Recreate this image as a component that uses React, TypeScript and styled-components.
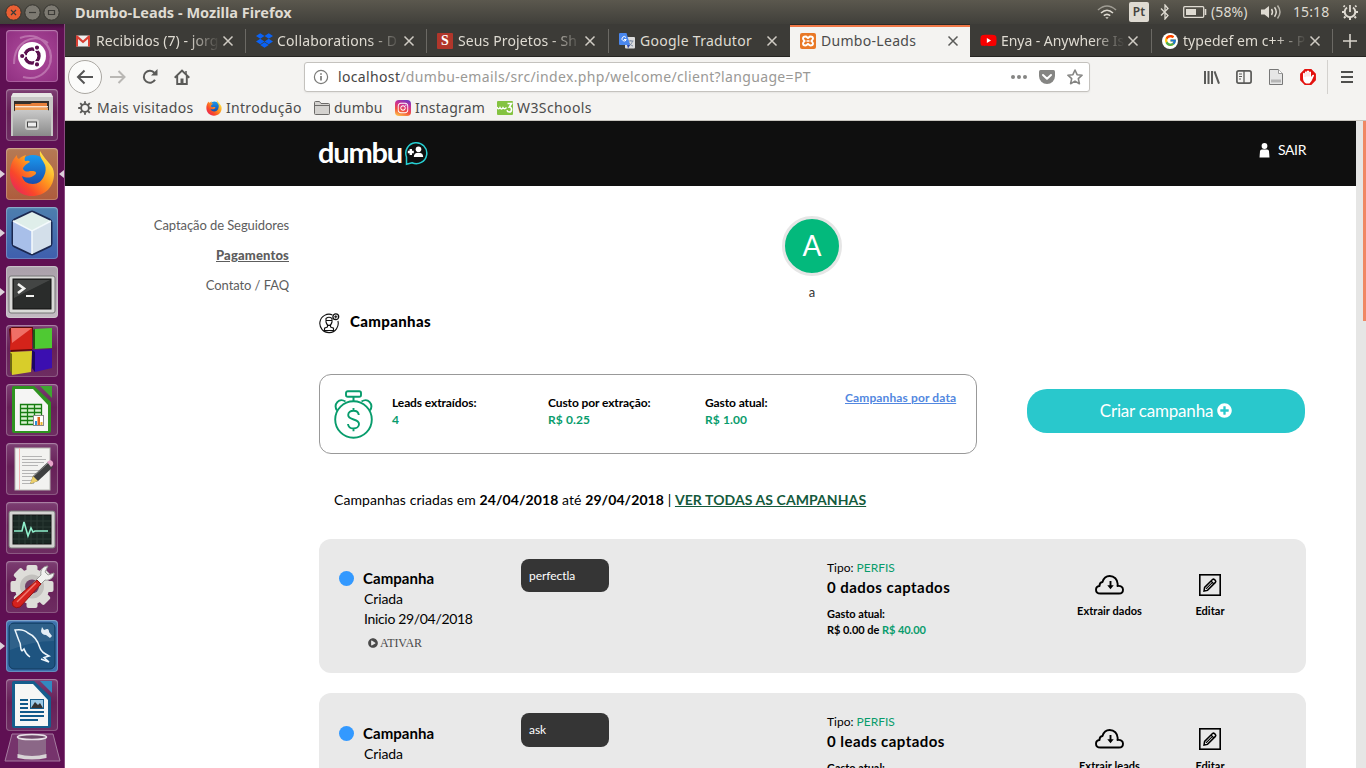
import React from "react";
import styled, { createGlobalStyle, css } from "styled-components";
import { FaPlusCircle, FaPlayCircle, FaDropbox, FaYoutube, FaInstagram } from "react-icons/fa";
import { FcGoogle } from "react-icons/fc";

const uiFont = `"Noto Sans", "Open Sans", sans-serif`;
const webFont = `Lato, "Open Sans", sans-serif`;

const GlobalStyle = createGlobalStyle`
  * { box-sizing: border-box; }
  html, body { margin: 0; padding: 0; background: #fff; overflow: hidden; }
  svg { display: block; flex: none; }
`;

/* ---------- desktop frame ---------- */

const Desktop = styled.div`
  width: 1366px;
  height: 768px;
  display: flex;
  flex-direction: column;
  overflow: hidden;
  font-family: ${uiFont};
`;

const Workspace = styled.div`
  flex: 1;
  min-height: 0;
  display: flex;
`;

const TitleBar = styled.header`
  height: 24px;
  flex: none;
  display: flex;
  align-items: center;
  padding-left: 5px;
  background: linear-gradient(#5b584e, #403f3a);
  color: #dfdbd2;
`;

const WindowButtons = styled.div`
  display: flex;
  gap: 2px;
  width: 70px;
`;

const WindowTitle = styled.div`
  flex: 1;
  font-size: 14.5px;
  font-weight: 700;
  letter-spacing: 0.02px;
  line-height: 22px;
  padding-bottom: 1px;
  white-space: nowrap;
`;

const Indicators = styled.div`
  display: flex;
  align-items: center;
  height: 24px;
`;

const IndicatorCell = styled.div<{ $w: number }>`
  width: ${(p) => p.$w}px;
  display: flex;
  align-items: center;
  font-size: 14px;
  letter-spacing: 0.1px;
  line-height: 24px;
  white-space: nowrap;
`;

const KeyboardBadge = styled.span`
  width: 20px;
  height: 20px;
  border-radius: 2px;
  background: #dfdbd2;
  color: #45433e;
  font-size: 12px;
  font-weight: 600;
  line-height: 20px;
  text-align: center;
`;

/* ---------- launcher ---------- */

const LauncherBar = styled.nav`
  width: 65px;
  flex: none;
  padding-top: 6px;
  display: flex;
  flex-direction: column;
  gap: 7px;
  overflow: hidden;
  background: linear-gradient(#3f0b38 0, #5f1053 5px, #5f1053 100%);
  border-right: 1px solid #8a4a80;
`;

const LauncherRow = styled.div`
  display: flex;
  align-items: center;
  height: 52px;
  flex: none;
`;

const Pip = styled.span<{ $on?: boolean; $right?: boolean }>`
  width: 0;
  height: 0;
  border-top: 4px solid transparent;
  border-bottom: 4px solid transparent;
  ${(p) =>
    p.$right
      ? css`border-right: 5px solid ${p.$on ? "#dcd0da" : "transparent"};`
      : css`
          border-left: 5px solid ${p.$on ? "#dcd0da" : "transparent"};
          margin-right: 1px;
        `}
`;

const Tile = styled.div<{ $bg: string }>`
  width: 52px;
  height: 52px;
  border-radius: 4px;
  background: ${(p) => p.$bg};
  box-shadow: inset 0 0 0 1px rgba(255, 255, 255, 0.2), inset 0 1px 2px rgba(255, 255, 255, 0.25);
  margin-right: 1px;
  overflow: hidden;
`;

const TrashSlot = styled.div`
  padding-left: 4px;
  margin-top: -5px;
`;

/* ---------- browser chrome ---------- */

const Browser = styled.section`
  flex: 1;
  min-width: 0;
  display: flex;
  flex-direction: column;
  background: #f4f3f1;
`;

const TabStrip = styled.div`
  height: 33px;
  flex: none;
  display: flex;
  background: #3c3b37;
`;

const Tab = styled.div<{ $active?: boolean; $line?: boolean; $w: number }>`
  width: ${(p) => p.$w}px;
  flex: none;
  display: flex;
  align-items: center;
  padding: 0 9px 0 10px;
  color: ${(p) => (p.$active ? "#4c4c4c" : "#dfdbd2")};
  font-size: 14px;
  ${(p) =>
    p.$active
      ? css`
          background: linear-gradient(#2a2926 0 1px, #f07746 1px 3px, #f4f3f1 3px);
        `
      : css`
          background: ${p.$line
            ? "linear-gradient(#6b6964, #6b6964) right 5px / 1px 24px no-repeat,"
            : ""} linear-gradient(#3c3b37 0 32px, #262522 32px);
        `}
`;

const TabIcon = styled.span`
  width: 16px;
  height: 16px;
  flex: none;
  display: flex;
  align-items: center;
  justify-content: center;
`;

const TabLabel = styled.span<{ $ls: number; $fade?: boolean }>`
  width: 124px;
  margin-left: 5px;
  overflow: hidden;
  white-space: nowrap;
  line-height: 22px;
  letter-spacing: ${(p) => p.$ls}px;
  ${(p) => p.$fade && css`mask-image: linear-gradient(90deg, #000 92px, transparent 124px);`}
`;

const CloseIcon = styled.svg`
  margin-left: 2px;
`;

const NewTab = styled.div`
  flex: 1;
  display: flex;
  align-items: center;
  justify-content: center;
  background: linear-gradient(#3c3b37 0 32px, #262522 32px);
`;

const Toolbar = styled.div`
  height: 40px;
  flex: none;
  display: flex;
  align-items: center;
  padding-left: 3px;
`;

const BackButton = styled.div`
  width: 34px;
  height: 34px;
  flex: none;
  border-radius: 50%;
  border: 1px solid #aaa7a2;
  background: #fbfbfa;
  display: flex;
  align-items: center;
  justify-content: center;
`;

const ToolButton = styled.div<{ $w?: number }>`
  width: ${(p) => p.$w ?? 32}px;
  flex: none;
  display: flex;
  justify-content: center;
`;

const AddressBar = styled.div`
  width: 786px;
  height: 30px;
  flex: none;
  margin: 0 106px;
  border: 1px solid #c4c2be;
  border-radius: 3px;
  background: #fff;
  display: flex;
  align-items: center;
  padding-left: 8px;
  box-shadow: 0 1px 2px rgba(0, 0, 0, 0.06);
`;

const Address = styled.div`
  flex: 1;
  margin-left: 9px;
  color: #9a9996;
  font-size: 14px;
  letter-spacing: 0.35px;
  line-height: 28px;
  white-space: nowrap;
  b { font-weight: 400; color: #454545; }
`;

const ToolDivider = styled.div`
  width: 1px;
  height: 34px;
  margin-left: 3px;
  background: #d3d1ce;
`;

const BookmarkBar = styled.div`
  height: 24px;
  flex: none;
  display: flex;
  padding: 0 0 2px 12px;
  border-bottom: 1px solid #c8c5bf;
`;

const Bookmark = styled.div<{ $w: number; $ls: number }>`
  width: ${(p) => p.$w}px;
  display: flex;
  align-items: center;
  gap: 4px;
  font-size: 14px;
  letter-spacing: ${(p) => p.$ls}px;
  line-height: 21px;
  color: #4c4c4c;
  white-space: nowrap;
`;

/* ---------- page ---------- */

const Viewport = styled.div`
  flex: 1;
  min-height: 0;
  display: flex;
`;

const Page = styled.div`
  width: 1291px;
  background: #fff;
  font-family: ${webFont};
  color: #000;
  overflow: hidden;
`;

const Scrollbar = styled.div`
  width: 10px;
  background: #e6e6e5;
  display: flex;
  justify-content: flex-end;
`;

const ScrollThumb = styled.div`
  width: 3px;
  height: 200px;
  background: #f08763;
`;

const SiteHeader = styled.div`
  height: 65px;
  background: #0f0f0f;
  display: flex;
  justify-content: space-between;
  padding: 0 50px 0 253px;
`;

const Logo = styled.div`
  display: flex;
  color: #fff;
  font-size: 29px;
  font-weight: 700;
  letter-spacing: -1.2px;
  line-height: 62px;
  svg { margin: 19px 0 0 2px; }
`;

const LogoText = styled.span`
  width: 84px;
`;

const Logout = styled.div`
  display: flex;
  gap: 8px;
  color: #fff;
  font-size: 14px;
  letter-spacing: -0.4px;
  line-height: 58px;
  svg { margin-top: 22px; }
`;

const PageBody = styled.div`
  display: flex;
`;

const SideMenu = styled.nav`
  width: 224px;
  padding-top: 24px;
  text-align: right;
`;

const SideLink = styled.a<{ $current?: boolean }>`
  display: block;
  font-size: 13px;
  line-height: 30px;
  letter-spacing: -0.08px;
  color: #5d5d5d;
  ${(p) => p.$current && css`font-weight: 900; letter-spacing: 0.15px; text-decoration: underline;`}
`;

const Main = styled.main`
  width: 987px;
  margin-left: 30px;
  padding-top: 30px;
`;

const Profile = styled.div`
  display: flex;
  flex-direction: column;
  align-items: center;
  width: 986px;
  font-size: 13px;
  line-height: 19px;
  color: #333;
`;

const Avatar = styled.div`
  width: 60px;
  height: 60px;
  margin-bottom: 7px;
  border: 3px solid #e6e6e6;
  border-radius: 50%;
  background: #03b97c;
  color: #fff;
  font-size: 28px;
  line-height: 53px;
  text-align: center;
`;

const SectionTitle = styled.h2`
  display: flex;
  align-items: flex-start;
  gap: 10px;
  height: 20px;
  margin: 10px 0 0;
  font-size: 15px;
  font-weight: 900;
  line-height: 18px;
  letter-spacing: 0.35px;
  svg { margin-top: 1px; }
`;

const SummaryRow = styled.div`
  display: flex;
  margin-top: 42px;
`;

const SummaryBox = styled.div`
  width: 658px;
  height: 80px;
  border: 1px solid #999;
  border-radius: 12px;
  display: flex;
  padding: 14px 0 0 14px;
  > svg { margin: 1px 19px 0 0; }
`;

const Stat = styled.div<{ $w: number }>`
  width: ${(p) => p.$w}px;
  padding-top: 5px;
  font-size: 12px;
  font-weight: 700;
  line-height: 17px;
  letter-spacing: -0.1px;
  white-space: nowrap;
`;

const Green = styled.span`
  color: #089c6c;
`;

const StatValue = styled(Green)`
  display: block;
  letter-spacing: 0.1px;
`;

const DateLink = styled.a`
  font-size: 12px;
  font-weight: 700;
  line-height: 17px;
  letter-spacing: 0.12px;
  color: #5287e0;
  text-decoration: underline;
  white-space: nowrap;
`;

const CreateButton = styled.button`
  width: 278px;
  height: 44px;
  margin: 15px 0 0 50px;
  padding: 0 0 2px;
  border: 0;
  border-radius: 20px;
  background: #29c8cc;
  color: #fff;
  font: 17px ${webFont};
  letter-spacing: -0.2px;
  display: flex;
  align-items: center;
  justify-content: center;
  gap: 4px;
`;

const FilterLine = styled.p`
  margin: 36px 0 29px 15px;
  font-size: 14px;
  line-height: 20px;
  letter-spacing: 0.08px;
  white-space: nowrap;
`;

const AllLink = styled.a`
  color: #145a3c;
  font-weight: 700;
  text-decoration: underline;
`;

const Card = styled.article`
  height: 134px;
  margin-bottom: 20px;
  border-radius: 12px;
  background: #e9e9e9;
  display: flex;
  padding: 20px 0 0 20px;
`;

const CardInfo = styled.div<{ $drop: number }>`
  width: 182px;
  display: grid;
  grid-template-columns: 15px 1fr;
  column-gap: 9px;
  align-content: start;
  padding-top: ${(p) => 10 + p.$drop}px;
`;

const StatusDot = styled.span`
  width: 15px;
  height: 15px;
  margin-top: 2px;
  border-radius: 50%;
  background: #3399ff;
`;

const CardTitle = styled.div`
  height: 20px;
  font-size: 15px;
  font-weight: 700;
  line-height: 18px;
  letter-spacing: 0.05px;
`;

const CardLine = styled.div<{ $ls: number }>`
  grid-column: 2;
  padding-left: 1px;
  font-size: 14px;
  line-height: 20px;
  letter-spacing: ${(p) => p.$ls}px;
`;

const Activate = styled.div`
  grid-column: 2;
  display: flex;
  align-items: center;
  gap: 2px;
  margin-top: 4px;
  padding-left: 5px;
  font: 12px "Liberation Serif", serif;
  line-height: 20px;
  letter-spacing: -0.1px;
  color: #4a4a4a;
`;

const TagColumn = styled.div`
  width: 306px;
`;

const Tag = styled.div<{ $h: number }>`
  width: 88px;
  height: ${(p) => p.$h}px;
  border-radius: 8px;
  background: #353535;
  color: #fff;
  padding-left: 8px;
  font-size: 12px;
  letter-spacing: -0.05px;
  line-height: 33px;
`;

const Metrics = styled.div`
  width: 240px;
  font-size: 12px;
  line-height: 18px;
`;

const MetricTotal = styled.div`
  font-size: 15px;
  font-weight: 700;
  letter-spacing: 0.45px;
  line-height: 20px;
  margin-bottom: 9px;
`;

const MetricSmall = styled.div`
  font-size: 11px;
  font-weight: 700;
  line-height: 16px;
  letter-spacing: -0.04px;
`;

const Action = styled.div<{ $w: number; $top: number; $gap: number }>`
  width: ${(p) => p.$w}px;
  display: flex;
  flex-direction: column;
  align-items: center;
  padding-top: ${(p) => p.$top}px;
  gap: ${(p) => p.$gap}px;
  font-size: 11px;
  font-weight: 700;
  line-height: 16px;
  letter-spacing: 0.05px;
  white-space: nowrap;
`;

/* ---------- icons ---------- */

const WinBtn = ({ kind }: { kind: "close" | "min" | "max" }) => (
  <svg width="17" height="17" viewBox="0 0 17 17">
    <circle cx="8.5" cy="8.5" r="7.7" fill={kind === "close" ? "#ea5f33" : "#7d7a72"} stroke="#35342f" />
    <g stroke="#3c3b37" strokeWidth="1.2" fill="none">
      {kind === "close" && <path d="M6 6l5 5M11 6l-5 5" />}
      {kind === "min" && <path d="M5 8.5h7" />}
      {kind === "max" && <path d="M5.5 6.5h6v4h-6z" />}
    </g>
  </svg>
);

const Cross = ({ dark }: { dark?: boolean }) => (
  <CloseIcon width="12" height="12" viewBox="0 0 12 12">
    <path d="M1.5 1.5l9 9M10.5 1.5l-9 9" stroke={dark ? "#5a5a58" : "#d0ccc4"} strokeWidth="1.5" />
  </CloseIcon>
);

const FirefoxIcon = ({ size }: { size: number }) => (
  <svg width={size} height={size} viewBox="0 0 46 46">
    <defs>
      <linearGradient id="fxo" x1="0.9" y1="0.1" x2="0.1" y2="0.9">
        <stop offset="0" stopColor="#fff14d" />
        <stop offset="0.4" stopColor="#ff9a1f" />
        <stop offset="0.75" stopColor="#f9472a" />
        <stop offset="1" stopColor="#e8285a" />
      </linearGradient>
      <linearGradient id="fxb" x1="0" y1="0" x2="0" y2="1">
        <stop offset="0" stopColor="#1a9af0" />
        <stop offset="1" stopColor="#1846a5" />
      </linearGradient>
    </defs>
    <circle cx="24" cy="20" r="16" fill="url(#fxb)" />
    <path
      d="M31 0c-1 6 3 9 5 14 1 3 1 7-1 11-2 5-6 8-11 8-6 0-10-3-11-8 4 2 8 2 11 0 2-1 3-2 3-3 0-2-3-2-6-2-3 1-5 1-7-2 0-2 3-5 7-7-1-2-4-1-5-1-1-2 0-4 1-6-4 1-6 3-7 4-2-1-2-2-2-4C3 9 1 15 1 23c0 12 9 22 22 22s22-9 22-22c0-9-7-11-14-23z"
      fill="url(#fxo)"
    />
  </svg>
);

const UbuntuIcon = () => (
  <svg width="52" height="52" viewBox="0 0 52 52">
    <path d="M8 34C8 12 27 2 42 13M44 20c5 17-9 32-27 27M14 8c18-7 34 7 30 25" fill="none" stroke="#d7a3cb" strokeOpacity=".5" strokeWidth="2" />
    <circle cx="26" cy="26" r="14" fill="#fff" />
    <circle cx="26" cy="26" r="7" fill="none" stroke="#5b114f" strokeWidth="3.4" />
    <path d="M26 26L14 26M26 26l6-10.4M26 26l6 10.4" stroke="#fff" strokeWidth="1.4" />
    <circle cx="26" cy="26" r="5.2" fill="#fff" />
    <g fill="#5b114f" stroke="#fff" strokeWidth="1.2">
      <circle cx="16.2" cy="26" r="2.7" />
      <circle cx="31" cy="17.6" r="2.7" />
      <circle cx="31" cy="34.4" r="2.7" />
    </g>
  </svg>
);

const FilesIcon = () => (
  <svg width="52" height="52" viewBox="0 0 52 52">
    <defs>
      <linearGradient id="cab" x1="0" y1="0" x2="0" y2="1">
        <stop offset="0" stopColor="#c9c9c9" />
        <stop offset="1" stopColor="#8a8a8a" />
      </linearGradient>
    </defs>
    <path d="M5 8l2-4h38l2 4v39H5z" fill="#c8c8c6" />
    <path d="M5 8l2-4h38l2 4z" fill="#e6e6e4" />
    <rect x="8" y="12" width="35" height="11" fill="#35302c" />
    <path d="M9 15h15l2-1h15v9H9z" fill="#e8803a" />
    <path d="M9 17h33v1.500H9z" fill="#fbe6d0" />
    <path d="M9 19h33v3H9z" fill="#f0a25a" />
    <path d="M7 23l3-2h32l3 2v24H7z" fill="url(#cab)" />
    <rect x="19" y="30" width="14" height="11" rx="3" fill="#d2d2d0" />
    <rect x="21.500" y="33" width="9" height="5" fill="#eee" stroke="#444" />
  </svg>
);

const CubeIcon = () => (
  <svg width="52" height="52" viewBox="0 0 52 52">
    <path d="M26 8l16 7.500v21L26 44l-16-7.500v-21z" fill="#1d2b52" stroke="#1b2850" strokeWidth="9" strokeLinejoin="round" />
    <path d="M26 5l19 9-19 10L7 14z" fill="#dfeeea" />
    <path d="M7 14l19 10v23L7 38z" fill="#a8bfe9" />
    <path d="M45 14L26 24v23l19-9z" fill="#d3dfea" />
    <path d="M7 14l19 10 19-10M26 24v23" fill="none" stroke="#f4fafc" strokeWidth="1.5" />
  </svg>
);

const TerminalIcon = () => (
  <svg width="52" height="52" viewBox="0 0 52 52">
    <rect x="3" y="10" width="46" height="37" rx="2" fill="#d9d9d7" stroke="#777" />
    <rect x="7" y="13" width="38" height="30" fill="#2a2c2b" stroke="#111" />
    <path d="M8 14h36L8 32z" fill="#fff" fillOpacity=".12" />
    <path d="M12 18l6 4.500-6 4.500" stroke="#f2f2f0" strokeWidth="2.600" fill="none" />
    <path d="M20 30h8" stroke="#f2f2f0" strokeWidth="2" />
  </svg>
);

const BlocksIcon = () => (
  <svg width="52" height="52" viewBox="0 0 52 52">
    <path d="M3 4l3-2h21l-1 23-21 2z" fill="#5c0b08" />
    <path d="M5 3h21v21L4 25z" fill="#d4231a" />
    <path d="M5 3h21L6 18z" fill="#ef6f66" />
    <path d="M28 4l18-1v20l-18 1z" fill="#4fc933" />
    <path d="M27 5l2-1v20l-2-1z" fill="#1c5b10" />
    <path d="M4 27l22-1-1 21-19 3z" fill="#d8cd2a" />
    <path d="M4 27l2 2v20l-2-3z" fill="#6d6714" />
    <path d="M26 25l20-1v19l-17 4-3-4z" fill="#3b0fb0" />
    <path d="M26 25l3 2v20l-3-4z" fill="#1d0663" />
  </svg>
);

const CalcIcon = () => (
  <svg width="52" height="52" viewBox="0 0 52 52">
    <path d="M6 4q0-2 2-2h20l17 16v29q0 2-2 2H8q-2 0-2-2z" fill="#2f9320" />
    <path d="M9 5h18l15 16v26H9z" fill="#f5f5f4" />
    <path d="M34 2h12v12z" fill="#3fa531" />
    <g stroke="#157c10" strokeWidth="1.300" fill="#d8f2cf">
      <path d="M14.500 20.500h21v20h-21z" />
      <path d="M14.500 24.500h21M14.500 28.500h21M14.500 32.500h21M14.500 36.500h21M21.500 20.500v20M28.500 20.500v20" />
    </g>
    <rect x="27.500" y="31.500" width="10" height="10" fill="#fff" stroke="#888" />
    <path d="M29 37h2v4h-2z" fill="#2a90d8" />
    <path d="M31.500 33h2.500v8h-2.500z" fill="#e0661d" />
    <path d="M34.500 38h2v3h-2z" fill="#e8b32a" />
  </svg>
);

const EditorIcon = () => (
  <svg width="52" height="52" viewBox="0 0 52 52">
    <rect x="9" y="5" width="35" height="42" fill="#f2f2f0" stroke="#b5b5b0" />
    <path d="M13.500 5v42" stroke="#f3b6b6" />
    <g stroke="#b4b4b4">
      <path d="M16 13.500h20M16 16.500h24M16 19.500h22M16 22.500h16M16 27.500h24M16 30.500h18M16 33.500h14M16 37.500h10M16 40.500h12" />
    </g>
    <path d="M24 41l3-8 15-14 5 5-15 14z" fill="#3e4040" />
    <path d="M24 41l3-8 5 5z" fill="#ecd06c" />
    <path d="M41 19l3-2q4 1 3 5l-2 2z" fill="#e6a5ca" />
    <path d="M28 33l14-13" stroke="#888" />
  </svg>
);

const MonitorIcon = () => (
  <svg width="52" height="52" viewBox="0 0 52 52">
    <rect x="3" y="9" width="46" height="37" rx="2" fill="#d3d3d1" stroke="#777" />
    <rect x="7" y="13" width="38" height="29" fill="#1a2824" stroke="#111" />
    <path d="M7 19h38M7 25h38M7 31h38M7 37h38M13 13v29M19 13v29M25 13v29M31 13v29M37 13v29" stroke="#2b3a35" />
    <path d="M8 29h8l2-9 4 14 3-8 2 4 2-1h13" fill="none" stroke="#8ff0cb" strokeWidth="1.600" />
  </svg>
);

const ToolsIcon = () => (
  <svg width="52" height="52" viewBox="0 0 52 52">
    <g fill="#deddd9">
      {[0, 45, 90, 135].map((a) => (
        <rect key={a} x="20.500" y="4" width="11" height="43" rx="2" transform={`rotate(${a} 26 25.500)`} />
      ))}
      <circle cx="26" cy="25.500" r="17.500" />
    </g>
    <circle cx="26" cy="25.500" r="12" fill="#c2c0bd" />
    <circle cx="26" cy="25.500" r="7" fill="#6f3d66" />
    <path d="M24 25l11-11c-1-5 2-9 7-9l-3 6 3 3 6-2c0 5-5 8-9 7L29 29z" fill="#f1f1ef" stroke="#9a9a98" />
    <path d="M31 19l4 4-21 23q-4 2-7-1-2-4 1-6z" fill="#d5221f" stroke="#98100f" />
    <path d="M30 22L11 41" stroke="#f27a72" strokeWidth="1.500" />
  </svg>
);

const DolphinIcon = () => (
  <svg width="52" height="52" viewBox="0 0 52 52">
    <rect x="3" y="3" width="46" height="46" rx="5" fill="#1e5480" stroke="#123b5e" />
    <path d="M4 4h44v17Q26 21 4 30z" fill="#fff" fillOpacity=".08" />
    <path
      d="M16 31c-2-2-1-5-2-8-2-4-3-8-5-13 6-1 10 0 13 3 7 3 10 8 12 15 1 4 5 6 9 8l-5 1.500 5 4.500-8-3M16 31l2-2c1 3 3 6 6 8"
      fill="none"
      stroke="#edf6fb"
      strokeWidth="1.500"
    />
    <path d="M36 7l2 3 3-1c2 0 2 2 2 3l3 4-2 2-4-3c-3 0-5-2-5-4z" fill="#e4edf5" />
  </svg>
);

const WriterIcon = () => (
  <svg width="52" height="52" viewBox="0 0 52 52">
    <path d="M6 4q0-2 2-2h20l17 16v29q0 2-2 2H8q-2 0-2-2z" fill="#155d8d" />
    <path d="M9 5h18l15 16v26H9z" fill="#f6f6f5" />
    <path d="M34 2h12v12z" fill="#3289c0" />
    <path d="M14 21h8M14 25h8M14 29h8M14 33h24M14 37h24M14 41h18" stroke="#115a8a" strokeWidth="2" />
    <rect x="24.500" y="20.500" width="13" height="9" fill="#9bc9e6" stroke="#155d8d" />
    <path d="M25 29l4-6 3 3 2-2 3 5z" fill="#333" />
  </svg>
);

const TrashIcon = () => (
  <svg width="57" height="32" viewBox="0 0 57 32">
    <path d="M8 1h41l7 27H1z" fill="#fff" fillOpacity=".15" stroke="#a57b9f" />
    <path d="M14 4v20q14 4 28 0V4z" fill="#9a8b99" fillOpacity=".6" />
    <ellipse cx="28" cy="4" rx="14.500" ry="2.600" fill="#6f4a6a" stroke="#e8e2e7" strokeWidth="1.500" />
    <path d="M13.500 21q14.500 4 29 0v4q-14.500 3-29 0z" fill="#d8d4d6" />
  </svg>
);

const GearSmall = () => (
  <svg width="16" height="16" viewBox="0 0 16 16" fill="none" stroke="#5a5a58">
    <circle cx="8" cy="8" r="3.900" strokeWidth="1.900" />
    <path
      d="M8 1.200v2.600M8 12.200v2.600M1.200 8h2.600M12.200 8h2.600M3.200 3.200l1.900 1.900M10.900 10.900l1.900 1.900M12.800 3.200l-1.900 1.900M5.100 10.900l-1.900 1.900"
      strokeWidth="1.900"
    />
  </svg>
);

const GmailIcon = () => (
  <svg width="16" height="16" viewBox="0 0 16 16">
    <rect x="1" y="2.500" width="14" height="11" rx="1" fill="#eee" />
    <path d="M1 13.500v-11h1.500L8 7.500l5.500-5H15v11h-2V6L8 10.300 3 6v7.500z" fill="#d93f33" />
  </svg>
);

const BadgeS = styled.span`
  width: 16px;
  height: 16px;
  border-radius: 1px;
  background: #b1362b;
  color: #fff;
  font: 900 14px/15px "Liberation Serif", serif;
  text-align: center;
`;

const TranslateIcon = () => (
  <svg width="16" height="16" viewBox="0 0 16 16">
    <rect x="6" y="4" width="10" height="11.500" rx="1" fill="#dcdcdc" />
    <path d="M9 8h5.500M11.800 7v1M13.500 8c-.5 2-2 4-3.500 5M10 9.500c.5 1.500 2 3 4 3.500" stroke="#7c8ba3" fill="none" />
    <path d="M1 0h6.500l3.500 12H1q-1 0-1-1V1q0-1 1-1z" fill="#4a87ee" />
    <path d="M8 12h3l-2 3.500z" fill="#3049a8" />
    <path d="M7 4.500a2.200 2.200 0 1 0 .3 2H5" fill="none" stroke="#fff" />
  </svg>
);

const XamppIcon = () => (
  <svg width="16" height="16" viewBox="0 0 16 16">
    <rect width="16" height="16" rx="2" fill="#e97826" />
    <path
      d="M5.500 3.500c-2 0-2.500 1-2.500 2s.8 1.700 1.500 2.500C3.800 8.800 3 9.500 3 10.500s.5 2 2.500 2 1.500-1.500 2.500-1.500.5 1.500 2.500 1.500 2.500-1 2.500-2-.8-1.700-1.500-2.500C12.200 7.200 13 6.500 13 5.500s-.5-2-2.500-2S9 5 8 5s-.5-1.500-2.500-1.500z"
      fill="none"
      stroke="#fff"
      strokeWidth="1.900"
    />
    <path d="M6.500 8h3" stroke="#fff" strokeWidth="1.500" />
  </svg>
);

const RoundLogo = styled.span`
  width: 16px;
  height: 16px;
  flex: none;
  border-radius: 50%;
  background: #fff;
  display: flex;
  align-items: center;
  justify-content: center;
`;

const YoutubeBox = styled.span`
  display: flex;
  background: radial-gradient(circle, #fff 3px, transparent 3px);
  color: #f80000;
`;

const InstaBox = styled.span`
  width: 16px;
  height: 16px;
  border-radius: 4px;
  color: #fff;
  display: flex;
  align-items: center;
  justify-content: center;
  background: linear-gradient(20deg, #fdc34d 5%, #f2503c 35%, #cd2f92 65%, #5a3cd0 100%);
`;

const FolderIcon = () => (
  <svg width="16" height="14" viewBox="0 0 16 14">
    <path d="M.5 12.500v-11q0-1 1-1h4l1.500 2h7.500q1 0 1 1v9q0 1-1 1h-13q-1 0-1-1z" fill="#d4d2cf" stroke="#6c6b69" />
    <path d="M1 4.500h14" stroke="#6c6b69" />
  </svg>
);

const W3Icon = () => (
  <svg width="16" height="14" viewBox="0 0 16 14">
    <rect width="16" height="14" rx="1" fill="#84c341" />
    <path d="M0 6q1.500 3.500 3 .5 1.500 3 3 0 1.500 2.500 3.500 0" fill="none" stroke="#fff" strokeWidth="1.300" />
    <path d="M10.500 2.500h4L12.300 6c3-.2 3 5 0 5-1.200 0-2-.6-2.300-1.800" fill="none" stroke="#fff" strokeWidth="1.600" />
  </svg>
);

const CampaignIcon = () => (
  <svg width="21" height="21" viewBox="0 0 21 21" fill="none" stroke="#111" strokeWidth="1.100">
    <path d="M13.500 1.900A9.200 9.200 0 1 0 18.900 8" />
    <circle cx="16.800" cy="3.800" r="2.900" strokeWidth="1.300" />
    <path d="M15.200 3.800h3.200M16.800 2.200v3.200" />
    <path d="M7 5.500q3-2.500 6 0v3.500q-1 3.500-3 3.500T7 9zM7 7.500h6" />
    <path d="M8.500 12v2l-3 1.200v2.300h9v-2.300l-3-1.200v-2" />
  </svg>
);

const StopwatchIcon = () => (
  <svg width="39" height="49" viewBox="0 0 39 49" fill="none" stroke="#089c6c" strokeWidth="1.900">
    <circle cx="19.500" cy="29.500" r="18.300" />
    <rect x="12" y="1.200" width="15" height="5.600" rx="1.800" />
    <path d="M19.500 7v4" strokeWidth="2" />
    <path d="M3 20.500C-1 14 5 7.500 11.500 11.500M36 20.500C40 14 34 7.500 27.500 11.500" />
    <path
      d="M24.800 25c-.3-3-2.500-4.300-5.300-4.300s-5.300 1.600-5.300 4.300c0 5.700 10.800 3.300 10.800 9 0 2.900-2.500 4.500-5.500 4.500s-5.200-1.500-5.500-4.500M19.500 18v2.700M19.500 38.500v2.800"
      strokeWidth="1.900"
    />
  </svg>
);

const CloudIcon = () => (
  <svg width="29" height="20" viewBox="0 0 29 20" fill="none" stroke="#000" strokeWidth="1.900" strokeLinejoin="round">
    <path d="M5.500 18.500C2.500 18.500 1 16.800 1 14.700s1.500-3.500 3.500-3.700C4.500 8.500 5.500 7.200 7.500 7 8.500 3.500 11 1 14.700 1c4.500 0 7.800 3.300 8 8-.1 1.300-.2 1.500-.2 2 3.500-.5 5.500 1.300 5.500 3.700 0 2.300-1.700 3.800-4 3.800z" />
    <path d="M15.500 6v6" />
    <path d="M12.300 10.300h6.400l-3.200 4z" fill="#000" stroke="none" />
  </svg>
);

const EditIcon = () => (
  <svg width="22" height="22" viewBox="0 0 22 22" fill="none" stroke="#000">
    <rect x="0.800" y="0.800" width="20.400" height="20.400" strokeWidth="1.600" />
    <path d="M5 17l.6-3.600L13.500 5.500q1-.8 2 .1l.9.900q.8 1 0 1.900L8.500 16.400z" strokeWidth="1.500" />
    <path d="M12 7l3 3M7 14.800L13 8.800" strokeWidth="1.100" />
  </svg>
);

/* ---------- data ---------- */

const tabs = [
  { icon: <GmailIcon />, label: "Recibidos (7) - jorg", w: 181, ls: 0.06, fade: true, line: true },
  { icon: <FaDropbox size={17} color="#0a62f5" />, label: "Collaborations - D", w: 181, ls: 0.15, fade: true, line: true },
  { icon: <BadgeS>S</BadgeS>, label: "Seus Projetos - Sh", w: 182, ls: 0.12, fade: true, line: true },
  { icon: <TranslateIcon />, label: "Google Tradutor", w: 181, ls: 0.27 },
  { icon: <XamppIcon />, label: "Dumbo-Leads", w: 180, ls: 0.3, active: true },
  { icon: <YoutubeBox><FaYoutube size={17} /></YoutubeBox>, label: "Enya - Anywhere Is", w: 182, ls: -0.05, fade: true, line: true },
  { icon: <RoundLogo><FcGoogle size={13} /></RoundLogo>, label: "typedef em c++ - P", w: 181, ls: 0.05, fade: true, line: true },
];

const purple = "linear-gradient(#7c3e72, #672058 45%, #6e2d62)";

const launcher = [
  { icon: <UbuntuIcon />, bg: "radial-gradient(#b04d9e, #8f2f80)" },
  { icon: <FilesIcon />, bg: purple },
  { icon: <FirefoxIcon size={46} />, bg: "linear-gradient(#b57a54, #ae5c3d)", left: true, right: true, pad: true },
  { icon: <CubeIcon />, bg: "linear-gradient(#4d7fae, #3f5fae)", left: true },
  { icon: <TerminalIcon />, bg: "linear-gradient(#a99fa9, #c3bac2)", left: true },
  { icon: <BlocksIcon />, bg: purple },
  { icon: <CalcIcon />, bg: purple },
  { icon: <EditorIcon />, bg: purple },
  { icon: <MonitorIcon />, bg: purple },
  { icon: <ToolsIcon />, bg: purple },
  { icon: <DolphinIcon />, bg: "#3c71ad", left: true },
  { icon: <WriterIcon />, bg: purple },
];

const PaddedIcon = styled.div`
  padding: 3px;
`;

const campaigns = [
  { tag: "perfectla", noun: "dados", tagHeight: 33, drop: 0 },
  { tag: "ask", noun: "leads", tagHeight: 34, drop: 1 },
];

/* ---------- sections ---------- */

const SystemBar = () => (
  <TitleBar>
    <WindowButtons>
      <WinBtn kind="close" />
      <WinBtn kind="min" />
      <WinBtn kind="max" />
    </WindowButtons>
    <WindowTitle>Dumbo-Leads - Mozilla Firefox</WindowTitle>
    <Indicators>
      <IndicatorCell $w={32}>
        <svg width="20" height="16" viewBox="0 0 20 16" fill="none" stroke="#dfdbd2" strokeWidth="1.600">
          <path d="M1 6Q10-2 19 6" opacity=".55" />
          <path d="M4 9q6-5.500 12 0M6.800 11.700q3.200-2.800 6.400 0" />
          <path d="M8.300 13.300h3.400L10 15z" fill="#dfdbd2" stroke="none" />
        </svg>
      </IndicatorCell>
      <IndicatorCell $w={31}><KeyboardBadge>Pt</KeyboardBadge></IndicatorCell>
      <IndicatorCell $w={23}>
        <svg width="10" height="16" viewBox="0 0 10 16" fill="none" stroke="#dfdbd2" strokeWidth="1.300">
          <path d="M1 4.500l7 7L5 15V1l3 3.500-7 7" />
        </svg>
      </IndicatorCell>
      <IndicatorCell $w={28}>
        <svg width="24" height="12" viewBox="0 0 24 12">
          <rect x=".7" y=".7" width="20" height="10.600" rx="1" fill="none" stroke="#dfdbd2" strokeWidth="1.300" />
          <rect x="3" y="3" width="10" height="6" fill="#dfdbd2" />
          <path d="M22.500 3v6" stroke="#dfdbd2" strokeWidth="1.600" />
        </svg>
      </IndicatorCell>
      <IndicatorCell $w={50}>(58%)</IndicatorCell>
      <IndicatorCell $w={32}>
        <svg width="21" height="16" viewBox="0 0 21 16" fill="none" stroke="#dfdbd2" strokeWidth="1.500">
          <path d="M0 5.500h3.500L8 2v12l-4.500-3.500H0z" fill="#dfdbd2" stroke="none" />
          <path d="M10.500 5q2 3 0 6M13.500 3.300q3.500 4.700 0 9.400" />
          <path d="M16.500 1.500q5 6.500 0 13" opacity=".7" />
        </svg>
      </IndicatorCell>
      <IndicatorCell $w={48}>15:18</IndicatorCell>
      <IndicatorCell $w={25}>
        <svg width="18" height="18" viewBox="0 0 18 18" fill="none" stroke="#dfdbd2">
          <path d="M6 4.500a5.300 5.300 0 1 0 6 0" strokeWidth="2" />
          <path d="M9 2v7" strokeWidth="1.800" />
          <path d="M3.800 3.800L2.600 2.600M14.200 3.800l1.200-1.200M3 9H1M17 9h-2M4.500 13.500L3 15M13.500 13.500L15 15M9 15v2" strokeWidth="2" />
        </svg>
      </IndicatorCell>
    </Indicators>
  </TitleBar>
);

const LauncherPanel = () => (
  <LauncherBar>
    {launcher.map((item, i) => (
      <LauncherRow key={i}>
        <Pip $on={item.left} />
        <Tile $bg={item.bg}>{item.pad ? <PaddedIcon>{item.icon}</PaddedIcon> : item.icon}</Tile>
        <Pip $right $on={item.right} />
      </LauncherRow>
    ))}
    <TrashSlot><TrashIcon /></TrashSlot>
  </LauncherBar>
);

const Chrome = () => (
  <>
    <TabStrip>
      {tabs.map((t) => (
        <Tab key={t.label} $w={t.w} $active={t.active} $line={t.line}>
          <TabIcon>{t.icon}</TabIcon>
          <TabLabel $ls={t.ls} $fade={t.fade}>{t.label}</TabLabel>
          <Cross dark={t.active} />
        </Tab>
      ))}
      <NewTab>
        <svg width="14" height="14" viewBox="0 0 14 14"><path d="M7 0v14M0 7h14" stroke="#d8d4cc" strokeWidth="1.600" /></svg>
      </NewTab>
    </TabStrip>
    <Toolbar>
      <BackButton>
        <svg width="18" height="16" viewBox="0 0 18 16" fill="none" stroke="#555" strokeWidth="2"><path d="M17 8H2M8.500 1.500L2 8l6.500 6.500" /></svg>
      </BackButton>
      <ToolButton>
        <svg width="16" height="14" viewBox="0 0 16 14" fill="none" stroke="#b9b7b4" strokeWidth="2"><path d="M0 7h14M8.500 1l6 6-6 6" /></svg>
      </ToolButton>
      <ToolButton>
        <svg width="16" height="16" viewBox="0 0 16 16" fill="none" stroke="#5a5a58" strokeWidth="2">
          <path d="M13 10.800A6 6 0 1 1 12.500 4" />
          <path d="M15.500 0v6.500H9z" fill="#5a5a58" stroke="none" />
        </svg>
      </ToolButton>
      <ToolButton>
        <svg width="16" height="16" viewBox="0 0 16 16" fill="none" stroke="#5a5a58" strokeWidth="1.900">
          <path d="M.7 8.700L8 1.500l7.300 7.200M3.200 7v8h9.600V7" />
          <path d="M6.500 15V9.500h3V15z" fill="#5a5a58" stroke="none" />
          <path d="M12 2v3" strokeWidth="1.500" />
        </svg>
      </ToolButton>
      <AddressBar>
        <svg width="16" height="16" viewBox="0 0 16 16" fill="none" stroke="#7a7a78" strokeWidth="1.200">
          <circle cx="8" cy="8" r="6.600" />
          <path d="M8 7v4.500M8 4.200v1.600" strokeWidth="1.700" />
        </svg>
        <Address><b>localhost</b>/dumbu-emails/src/index.php/welcome/client?language=PT</Address>
        <ToolButton $w={28}>
          <svg width="16" height="4" viewBox="0 0 16 4" fill="#858583"><circle cx="2" cy="2" r="2" /><circle cx="8" cy="2" r="2" /><circle cx="14" cy="2" r="2" /></svg>
        </ToolButton>
        <ToolButton $w={28}>
          <svg width="16" height="14" viewBox="0 0 16 14">
            <path d="M1.500 0h13Q16 0 16 1.500V6a8 8 0 0 1-16 0V1.500Q0 0 1.500 0z" fill="#858583" />
            <path d="M4 5l4 3.700L12 5" fill="none" stroke="#fff" strokeWidth="2" strokeLinecap="round" strokeLinejoin="round" />
          </svg>
        </ToolButton>
        <ToolButton $w={28}>
          <svg width="16" height="16" viewBox="0 0 16 16" fill="none" stroke="#858583" strokeWidth="1.600" strokeLinejoin="round">
            <path d="M8 1l2.100 4.700 5 .5-3.800 3.400 1.100 5.100L8 12.100l-4.400 2.600 1.100-5.100L.9 6.200l5-.5z" />
          </svg>
        </ToolButton>
      </AddressBar>
      <ToolButton>
        <svg width="16" height="14" viewBox="0 0 16 14" stroke="#5a5a58" strokeWidth="2"><path d="M1 1v13M4.500 1v13M8 1v13M10.500 1.300L15 13.700" /></svg>
      </ToolButton>
      <ToolButton>
        <svg width="16" height="14" viewBox="0 0 16 14" fill="none" stroke="#5a5a58">
          <rect x=".9" y=".9" width="14.200" height="12.200" rx="1.800" strokeWidth="1.700" />
          <path d="M8 1v12" strokeWidth="1.300" />
          <path d="M3 4h3M3 6.500h3M3 9h2" />
        </svg>
      </ToolButton>
      <ToolButton>
        <svg width="14" height="16" viewBox="0 0 14 16">
          <path d="M.5.500h9l4 4v11H.5z" fill="#e6e6e6" stroke="#777" />
          <path d="M9.500.500v4h4" fill="#fff" stroke="#999" />
          <rect x="2" y="10.500" width="10" height="3" fill="#b5b5b5" />
        </svg>
      </ToolButton>
      <ToolButton>
        <svg width="16" height="16" viewBox="0 0 16 16">
          <path d="M5 .8h6L15.200 5v6L11 15.200H5L.8 11V5z" fill="#e3120f" stroke="#e3120f" strokeWidth="1.400" />
          <path d="M3 9V4.500q1-1.500 2 0V3q1-1.500 2 0v-.9q1-1.200 2 0V3q1-1.200 2 0v5l1.500-2q1.800-.7 1.500.7L11.500 12 9.500 14.500H6Q3 12.500 3 9z" fill="#fff" />
          <path d="M5 4v4M7 3v4.500M9 3v4.500" stroke="#f3a09e" strokeWidth=".5" />
        </svg>
      </ToolButton>
      <ToolDivider />
      <ToolButton $w={37}>
        <svg width="12" height="12" viewBox="0 0 12 12" stroke="#4f4f4d" strokeWidth="2"><path d="M0 1h12M0 6h12M0 11h12" /></svg>
      </ToolButton>
    </Toolbar>
    <BookmarkBar>
      <Bookmark $w={129} $ls={0.3}><GearSmall />Mais visitados</Bookmark>
      <Bookmark $w={108} $ls={0.3}><FirefoxIcon size={16} />Introdução</Bookmark>
      <Bookmark $w={81} $ls={0.2}><FolderIcon />dumbu</Bookmark>
      <Bookmark $w={102} $ls={0.23}><InstaBox><FaInstagram size={12} /></InstaBox>Instagram</Bookmark>
      <Bookmark $w={100} $ls={0.4}><W3Icon />W3Schools</Bookmark>
    </BookmarkBar>
  </>
);

const CampaignCard = ({ tag, noun, tagHeight, drop }: (typeof campaigns)[number]) => (
  <Card>
    <CardInfo $drop={drop}>
      <StatusDot />
      <CardTitle>Campanha</CardTitle>
      <CardLine $ls={-0.1}>Criada</CardLine>
      <CardLine $ls={-0.33}>Inicio 29/04/2018</CardLine>
      <Activate><FaPlayCircle size={10} />ATIVAR</Activate>
    </CardInfo>
    <TagColumn><Tag $h={tagHeight}>{tag}</Tag></TagColumn>
    <Metrics>
      <div>Tipo: <Green>PERFIS</Green></div>
      <MetricTotal>0 {noun} captados</MetricTotal>
      <MetricSmall>Gasto atual:</MetricSmall>
      <MetricSmall>R$ 0.00 de <Green>R$ 40.00</Green></MetricSmall>
    </Metrics>
    <Action $w={85} $top={16} $gap={8 + drop}><CloudIcon />Extrair {noun}</Action>
    <Action $w={116} $top={15} $gap={7 + drop}><EditIcon />Editar</Action>
  </Card>
);

const Site = () => (
  <Page>
    <SiteHeader>
      <Logo>
        <LogoText>dumbu</LogoText>
        <svg width="24" height="26" viewBox="0 0 24 26">
          <path d="M2.500 17A10.500 10.500 0 1 1 8 22.800l-5.500 1.400z" fill="none" stroke="#27cfd2" strokeWidth="1.500" />
          <path d="M3.800 12h6M6.800 9v6" stroke="#fff" strokeWidth="2.400" />
          <circle cx="14.500" cy="9.300" r="2.800" fill="#fff" />
          <path d="M9.800 17q0-4.300 4.700-4.300t4.700 4.300z" fill="#fff" />
        </svg>
      </Logo>
      <Logout>
        <svg width="11" height="15" viewBox="0 0 11 15" fill="#fff"><circle cx="5.500" cy="3" r="2.900" /><path d="M.5 14.500L1 8q.3-1.500 1.800-1.500h5.400Q9.700 6.500 10 8l.5 6.500z" /></svg>
        SAIR
      </Logout>
    </SiteHeader>
    <PageBody>
      <SideMenu>
        <SideLink>Captação de Seguidores</SideLink>
        <SideLink $current>Pagamentos</SideLink>
        <SideLink>Contato / FAQ</SideLink>
      </SideMenu>
      <Main>
        <Profile><Avatar>A</Avatar>a</Profile>
        <SectionTitle><CampaignIcon />Campanhas</SectionTitle>
        <SummaryRow>
          <SummaryBox>
            <StopwatchIcon />
            <Stat $w={156}>Leads extraídos:<StatValue>4</StatValue></Stat>
            <Stat $w={157}>Custo por extração:<StatValue>R$ 0.25</StatValue></Stat>
            <Stat $w={140}>Gasto atual:<StatValue>R$ 1.00</StatValue></Stat>
            <DateLink>Campanhas por data</DateLink>
          </SummaryBox>
          <CreateButton>Criar campanha <FaPlusCircle size={15} /></CreateButton>
        </SummaryRow>
        <FilterLine>
          Campanhas criadas em <b>24/04/2018</b> até <b>29/04/2018</b> | <AllLink>VER TODAS AS CAMPANHAS</AllLink>
        </FilterLine>
        {campaigns.map((c) => <CampaignCard key={c.tag} {...c} />)}
      </Main>
    </PageBody>
  </Page>
);

export default function App() {
  return (
    <>
      <GlobalStyle />
      <Desktop>
        <SystemBar />
        <Workspace>
          <LauncherPanel />
          <Browser>
            <Chrome />
            <Viewport>
              <Site />
              <Scrollbar><ScrollThumb /></Scrollbar>
            </Viewport>
          </Browser>
        </Workspace>
      </Desktop>
    </>
  );
}
